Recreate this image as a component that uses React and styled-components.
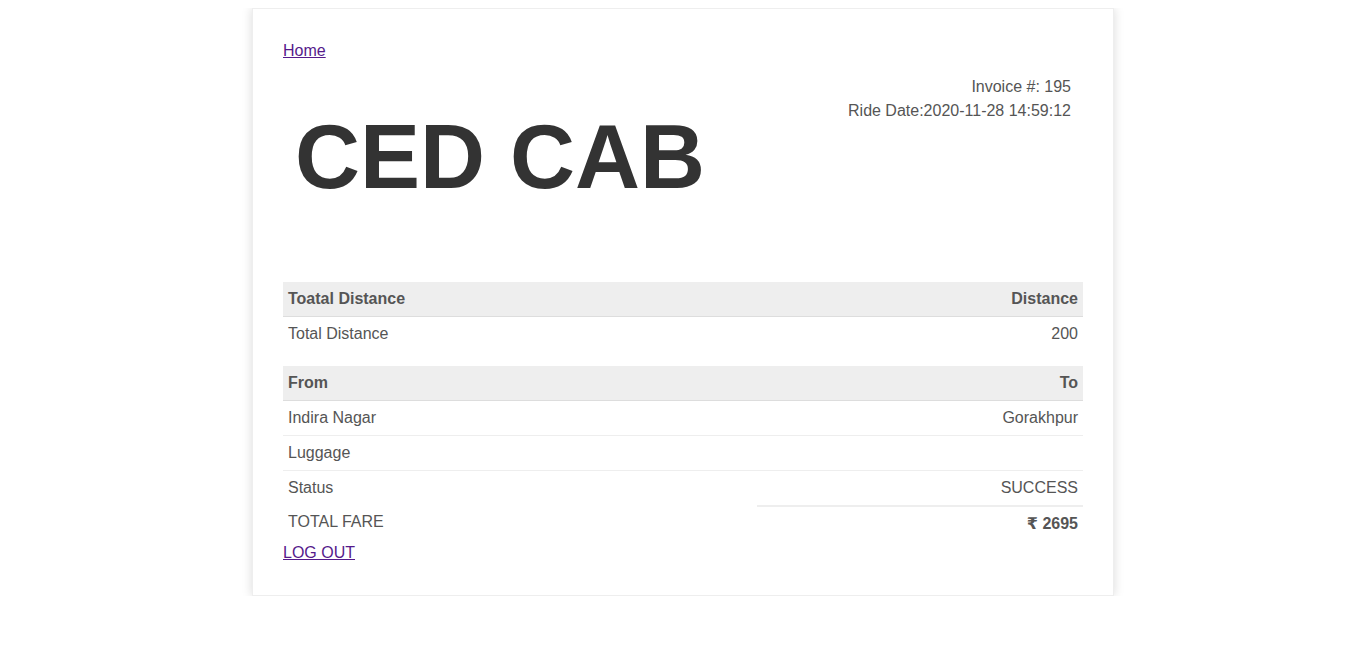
import React from 'react';
import styled, { createGlobalStyle } from 'styled-components';

const GlobalStyle = createGlobalStyle`
  body {
    margin: 8px;
    background: #fff;
    font-family: 'Liberation Sans', Arial, 'DejaVu Sans', sans-serif;
  }
`;

const InvoiceBox = styled.div`
  max-width: 800px;
  margin: 0 auto;
  padding: 30px;
  border: 1px solid #eee;
  box-shadow: 0 0 10px rgba(0, 0, 0, 0.15);
  font-size: 16px;
  line-height: 24px;
  color: #555;
  background: #fff;
`;

const NavLink = styled.a`
  display: block;
  width: max-content;
  color: #551a8b;
  text-decoration: underline;
`;

const Header = styled.div`
  display: flex;
  justify-content: space-between;
  align-items: flex-start;
  height: 219px;
  padding: 12px 12px 0 12px;
  box-sizing: border-box;
`;

const Title = styled.div`
  margin-top: 37px;
  font-size: 90px;
  line-height: 90px;
  font-weight: bold;
  color: #333;
`;

const Info = styled.div`
  text-align: right;
`;

const Row = styled.div`
  display: grid;
  grid-template-columns: 474px 326px;
  background: ${(p) => (p.heading ? '#eee' : 'transparent')};
  font-weight: ${(p) => (p.heading ? 'bold' : 'normal')};
`;

const Cell = styled.div`
  padding: 5px 5px ${(p) => (p.details ? '20px' : '5px')};
  text-align: ${(p) => (p.right ? 'right' : 'left')};
  min-height: 24px;
  border-bottom: ${(p) =>
    p.heading ? '1px solid #ddd' : p.item ? '1px solid #eee' : 'none'};
  border-top: ${(p) => (p.total ? '2px solid #eee' : 'none')};
  font-weight: ${(p) => (p.total ? 'bold' : 'inherit')};
`;

const App = () => {
  const items = [
    ['Indira Nagar', 'Gorakhpur'],
    ['Luggage', ''],
  ];

  return (
    <>
      <GlobalStyle />
      <InvoiceBox>
        <NavLink href="#">Home</NavLink>
        <Header>
          <Title>CED CAB</Title>
          <Info>
            Invoice #: 195
            <br />
            Ride Date:2020-11-28 14:59:12
          </Info>
        </Header>

        <Row heading>
          <Cell heading>Toatal Distance</Cell>
          <Cell heading right>Distance</Cell>
        </Row>
        <Row>
          <Cell details>Total Distance</Cell>
          <Cell details right>200</Cell>
        </Row>

        <Row heading>
          <Cell heading>From</Cell>
          <Cell heading right>To</Cell>
        </Row>
        {items.map(([from, to]) => (
          <Row key={from}>
            <Cell item>{from}</Cell>
            <Cell item right>{to}</Cell>
          </Row>
        ))}
        <Row>
          <Cell>Status</Cell>
          <Cell right>SUCCESS</Cell>
        </Row>
        <Row>
          <Cell>TOTAL FARE</Cell>
          <Cell total right>₹ 2695</Cell>
        </Row>

        <NavLink href="#">LOG OUT</NavLink>
      </InvoiceBox>
    </>
  );
};

export default App;
